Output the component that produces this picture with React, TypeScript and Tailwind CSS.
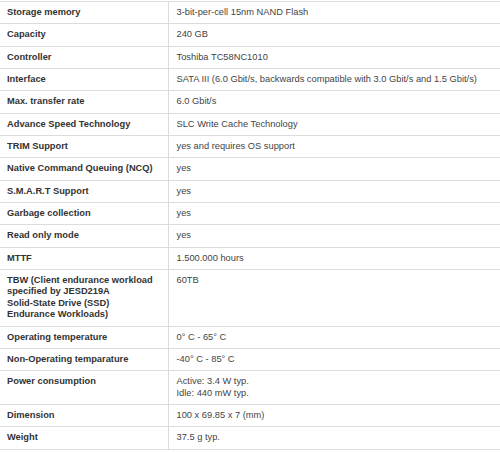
const specs: [string[], string[]][] = [
  [['Storage memory'], ['3-bit-per-cell 15nm NAND Flash']],
  [['Capacity'], ['240 GB']],
  [['Controller'], ['Toshiba TC58NC1010']],
  [['Interface'], ['SATA III (6.0 Gbit/s, backwards compatible with 3.0 Gbit/s and 1.5 Gbit/s)']],
  [['Max. transfer rate'], ['6.0 Gbit/s']],
  [['Advance Speed Technology'], ['SLC Write Cache Technology']],
  [['TRIM Support'], ['yes and requires OS support']],
  [['Native Command Queuing (NCQ)'], ['yes']],
  [['S.M.A.R.T Support'], ['yes']],
  [['Garbage collection'], ['yes']],
  [['Read only mode'], ['yes']],
  [['MTTF'], ['1.500.000 hours']],
  [
    ['TBW (Client endurance workload', 'specified by JESD219A', 'Solid-State Drive (SSD)', 'Endurance Workloads)'],
    ['60TB'],
  ],
  [['Operating temperature'], ['0° C - 65° C']],
  [['Non-Operating temparature'], ['-40° C - 85° C']],
  [['Power consumption'], ['Active: 3.4 W typ.', 'Idle: 440 mW typ.']],
  [['Dimension'], ['100 x 69.85 x 7 (mm)']],
  [['Weight'], ['37.5 g typ.']],
];

export default function App() {
  return (
    <div className="w-[500px] h-[452px] overflow-hidden bg-white pt-[1px] font-['Liberation_Sans',Arial,sans-serif] text-[9.3px] leading-[11.35px]">
      <table className="w-[520px] border-collapse table-fixed">
        <colgroup>
          <col className="w-[168px]" />
          <col />
        </colgroup>
        <tbody>
          {specs.map(([label, values]) => (
            <tr key={label[0]} className="border-t border-b border-[#dcdcdc]">
              <td className="align-top py-[5px] pl-[7px] pr-[8px] font-bold text-[#333]">
                {label.map((l) => (
                  <div key={l} className="whitespace-nowrap">{l}</div>
                ))}
              </td>
              <td className="align-top py-[5px] pl-[8px] border-l border-[#dcdcdc] text-[#444]">
                {values.map((v) => (
                  <div key={v}>{v}</div>
                ))}
              </td>
            </tr>
          ))}
        </tbody>
      </table>
    </div>
  );
}
